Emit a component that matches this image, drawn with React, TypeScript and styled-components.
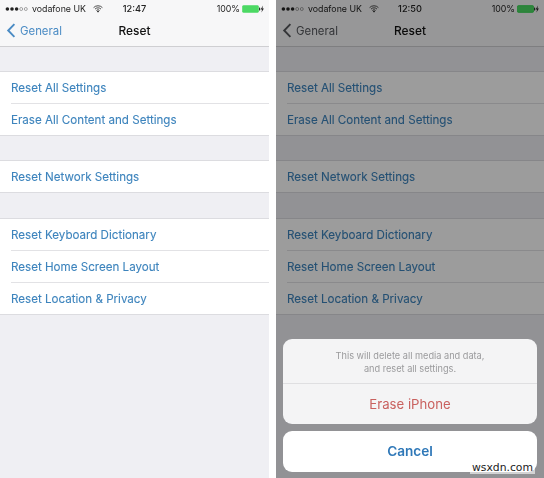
import React from "react";
import styled, { createGlobalStyle } from "styled-components";

const Global = createGlobalStyle`
  html, body { margin: 0; padding: 0; background: #fff; }
  body { font-family: Inter, "Liberation Sans", sans-serif; }
`;

const Page = styled.div`
  position: relative;
  width: 544px;
  height: 478px;
  display: flex;
  justify-content: space-between;
  overflow: hidden;
  background: #fff;
`;

const Phone = styled.section<{ $width: number }>`
  position: relative;
  width: ${(p) => p.$width}px;
  height: 478px;
  background: #efeff3;
  overflow: hidden;
  filter: blur(0.3px);
`;

const Header = styled.header`
  height: 46px;
  background: #f7f7f8;
  border-bottom: 1px solid #cfcfd2;
  display: flex;
  flex-direction: column;
`;

const StatusBar = styled.div`
  height: 16px;
  display: grid;
  grid-template-columns: 1fr auto 1fr;
  align-items: center;
  padding: 1px 5px 0 5px;
  box-sizing: border-box;
  font-size: 8.8px;
  color: #222;
`;

const Carrier = styled.div`
  display: flex;
  align-items: center;
  gap: 2px;
`;

const Signal = styled.svg`
  width: 25px;
  height: 6px;
`;

const Clock = styled.div`
  font-size: 9.2px;
  font-weight: 500;
`;

const BatteryGroup = styled.div`
  display: flex;
  justify-content: flex-end;
  align-items: center;
  gap: 2px;
`;

const NavBar = styled.div`
  flex: 1;
  display: grid;
  grid-template-columns: 1fr auto 1fr;
  align-items: center;
  padding: 0 6px 1px 6px;
`;

const Back = styled.div<{ $dim: boolean }>`
  display: flex;
  align-items: center;
  gap: 4px;
  font-size: 11.4px;
  color: ${(p) => (p.$dim ? "#55575c" : "#4a8bc4")};
`;

const Title = styled.div`
  font-size: 11.9px;
  font-weight: 500;
  color: #111;
`;

const Group = styled.ul<{ $top: number }>`
  list-style: none;
  margin: ${(p) => p.$top}px 0 0;
  padding: 0 0 0 11px;
  background: #fff;
  border-top: 1px solid #dcdce0;
  border-bottom: 1px solid #dcdce0;
`;

const Row = styled.li`
  height: 31px;
  display: flex;
  align-items: center;
  font-size: 11.6px;
  color: #3d84bd;
  -webkit-text-stroke: 0.1px currentColor;
  & + & {
    border-top: 1px solid #e2e2e5;
  }
`;

const Dim = styled.div`
  position: absolute;
  inset: 0;
  background: rgba(0, 0, 0, 0.39);
`;

const Sheet = styled.div`
  position: absolute;
  left: 7px;
  right: 7px;
  bottom: 6px;
  display: flex;
  flex-direction: column;
  gap: 7px;
`;

const Card = styled.div<{ $solid?: boolean }>`
  border-radius: 9px;
  background: ${(p) => (p.$solid ? "#fff" : "#f4f4f5")};
  overflow: hidden;
`;

const Message = styled.div`
  height: 45px;
  padding-top: 2px;
  border-bottom: 1px solid #dfdfe1;
  box-sizing: border-box;
  display: flex;
  flex-direction: column;
  align-items: center;
  justify-content: center;
  font-size: 9.2px;
  line-height: 13px;
  color: #9a9a9c;
`;

const Destructive = styled.div`
  height: 40px;
  display: flex;
  align-items: center;
  justify-content: center;
  font-size: 13.2px;
  color: #c9615f;
`;

const Cancel = styled.div`
  height: 41px;
  padding-bottom: 2px;
  box-sizing: border-box;
  display: flex;
  align-items: center;
  justify-content: center;
  font-size: 13.6px;
  font-weight: 600;
  color: #2f78b8;
`;

const Watermark = styled.div`
  position: absolute;
  right: 9px;
  bottom: 4px;
  padding: 0 2px;
  font-family: "DejaVu Sans", sans-serif;
  font-size: 10.8px;
  line-height: 12px;
  color: #222;
  background: rgba(255, 255, 255, 0.6);
`;

const SignalIcon = () => (
  <Signal viewBox="0 0 25 6">
    <circle cx="2.4" cy="3" r="1.8" fill="#222" />
    <circle cx="7" cy="3" r="1.8" fill="#222" />
    <circle cx="11.6" cy="3" r="1.8" fill="#222" />
    <circle cx="16.2" cy="3" r="1.5" fill="none" stroke="#555" strokeWidth="0.5" />
    <circle cx="20.8" cy="3" r="1.5" fill="none" stroke="#555" strokeWidth="0.5" />
  </Signal>
);

const WifiIcon = () => (
  <svg width="10" height="8" viewBox="0 0 10 8" style={{ marginLeft: 5 }}>
    <path d="M.6 2.6a6.2 6.2 0 0 1 8.8 0M2 4.1a4.2 4.2 0 0 1 6 0M3.4 5.5a2.2 2.2 0 0 1 3.2 0" fill="none" stroke="#222" strokeWidth="0.8" />
    <path d="M5 7.6 3.9 6.4a1.5 1.5 0 0 1 2.2 0Z" fill="#222" />
  </svg>
);

const BatteryIcon = ({ outlined }: { outlined: boolean }) => (
  <svg width="22" height="8" viewBox="0 0 22 8">
    <rect x="0.4" y="0.6" width="16.2" height="6.8" rx="1.2" fill="#4cd964" stroke={outlined ? "#1c3" : "#4cd964"} strokeWidth="0.6" />
    <rect x="17" y="2.6" width="1.2" height="2.8" rx="0.5" fill="#333" />
    <path d="M21 .6 18.6 4.4h1.5L19.4 7.4l2.5-3.9h-1.5Z" fill="#222" />
  </svg>
);

const Chevron = ({ color }: { color: string }) => (
  <svg width="10" height="15" viewBox="0 0 10 15">
    <path d="M8.4 1.2 2.2 7.5l6.2 6.3" fill="none" stroke={color} strokeWidth="1.9" />
  </svg>
);

const groups = [
  { top: 24, rows: ["Reset All Settings", "Erase All Content and Settings"] },
  { top: 24, rows: ["Reset Network Settings"] },
  { top: 25, rows: ["Reset Keyboard Dictionary", "Reset Home Screen Layout", "Reset Location & Privacy"] },
];

const Screen = ({ time, dim }: { time: string; dim: boolean }) => (
  <>
    <Header>
      <StatusBar>
        <Carrier>
          <SignalIcon />
          <span>vodafone UK</span>
          <WifiIcon />
        </Carrier>
        <Clock>{time}</Clock>
        <BatteryGroup>
          <span>100%</span>
          <BatteryIcon outlined={dim} />
        </BatteryGroup>
      </StatusBar>
      <NavBar>
        <Back $dim={dim}>
          <Chevron color={dim ? "#55575c" : "#4a8bc4"} />
          <span>General</span>
        </Back>
        <Title>Reset</Title>
      </NavBar>
    </Header>
    {groups.map((g) => (
      <Group key={g.rows[0]} $top={g.top}>
        {g.rows.map((r) => (
          <Row key={r}>{r}</Row>
        ))}
      </Group>
    ))}
  </>
);

export default function App() {
  return (
    <Page>
      <Global />
      <Phone $width={269}>
        <Screen time="12:47" dim={false} />
      </Phone>
      <Phone $width={268}>
        <Screen time="12:50" dim />
        <Dim />
        <Sheet>
          <Card>
            <Message>
              <span>This will delete all media and data,</span>
              <span>and reset all settings.</span>
            </Message>
            <Destructive>Erase iPhone</Destructive>
          </Card>
          <Card $solid>
            <Cancel>Cancel</Cancel>
          </Card>
        </Sheet>
      </Phone>
      <Watermark>wsxdn.com</Watermark>
    </Page>
  );
}
